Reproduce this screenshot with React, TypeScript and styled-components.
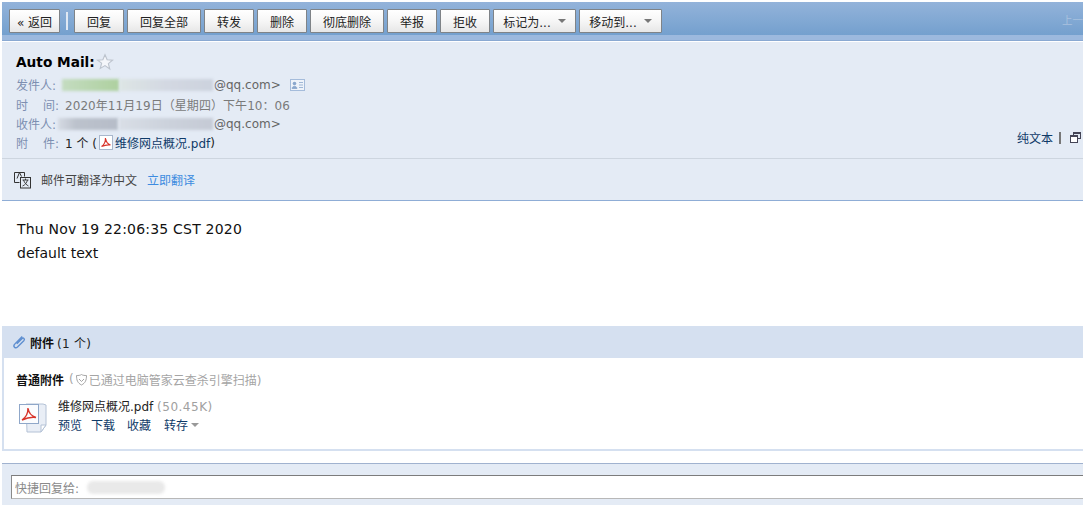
import React from "react";
import styled, { createGlobalStyle } from "styled-components";

const Global = createGlobalStyle`
  html, body { margin: 0; padding: 0; background: #fff; overflow: hidden; }
  body { font-family: "DejaVu Sans", "Noto Sans CJK SC", sans-serif; font-size: 12px; color: #000; }
  * { box-sizing: border-box; }
`;

const Page = styled.div`
  width: 1083px;
  height: 505px;
  padding: 2px 0 0 2px;
  overflow: hidden;
`;

const Toolbar = styled.div`
  height: 39px;
  display: flex;
  align-items: flex-start;
  padding: 7px 0 0 7px;
  background: linear-gradient(to bottom, #93b3da 0, #74a0ce 33px, #9cb9de 33px, #9cb9de 38px, #8aa9d2 38px, #8aa9d2 39px);
  justify-content: space-between;
  overflow: hidden;
`;

const ToolGroup = styled.div`
  display: flex;
  align-items: center;
  gap: 3px;
`;

const ToolButton = styled.div<{ $w: number }>`
  width: ${(p) => p.$w}px;
  height: 24px;
  display: flex;
  align-items: center;
  justify-content: center;
  gap: 7px;
  border: 1px solid #7f8387;
  border-radius: 1px;
  background: linear-gradient(to bottom, #ffffff 0, #f6f6f6 50%, #e7e7e7 100%);
  font-size: 12px;
  color: #222;
  white-space: nowrap;
`;

const ToolDivider = styled.span`
  width: 2px;
  height: 18px;
  margin: 0 3px 0 3px;
  background: #dfe8f3;
`;

const Caret = styled.i<{ $c?: string }>`
  display: inline-block;
  width: 0;
  height: 0;
  border-left: 4px solid transparent;
  border-right: 4px solid transparent;
  border-top: 4px solid ${(p) => p.$c || "#777"};
`;

const FadedNav = styled.span`
  font-size: 10.5px;
  color: #a9c1de;
  margin: 3px 0 0 0;
  white-space: nowrap;
`;

const Header = styled.div`
  margin-top: 1px;
  height: 117px;
  padding: 10px 0 0 14px;
  background: #e4ebf5;
  border-bottom: 1px solid #cdd5df;
  position: relative;
`;

const Subject = styled.div`
  display: flex;
  align-items: center;
  height: 20px;
  gap: 1px;
  font-size: 13.7px;
  font-weight: bold;
  margin-bottom: 3px;
`;

const MetaRow = styled.div<{ $h?: number }>`
  display: flex;
  align-items: center;
  height: ${(p) => p.$h || 19}px;
  color: #7a7a7a;
  font-size: 12px;
  white-space: nowrap;
`;

const MetaLabel = styled.span`
  width: 49px;
  color: #7d8fb1;
  display: flex;
  justify-content: space-between;
  padding-right: 6px;
`;

const Smudge = styled.span<{ $w: number; $bg: string; $ml?: number }>`
  display: inline-block;
  width: ${(p) => p.$w}px;
  height: 12px;
  margin-left: ${(p) => p.$ml || 0}px;
  margin-right: 1px;
  background: ${(p) => p.$bg};
  filter: blur(1.5px);
`;

const MetaIcon = styled.svg`
  margin-left: 9px;
`;

const Address = styled.span`
  color: #666;
`;

const SentAt = styled.span`
  letter-spacing: 0.06px;
`;

const Black = styled.span`
  color: #222;
`;

const SmallPdfIcon = styled.svg`
  margin: 0 2px 0 2px;
`;

const FileLink = styled.span`
  color: #0f3a68;
`;

const HeaderTools = styled.div`
  position: absolute;
  right: 2px;
  bottom: 12px;
  display: flex;
  align-items: center;
  color: #0f3a68;
  font-size: 12px;
  gap: 6px;
`;

const ToolSep = styled.span`
  width: 2px;
  height: 12px;
  background: #777;
  margin-right: 3px;
`;

const Translate = styled.div`
  height: 42px;
  padding-left: 12px;
  display: flex;
  align-items: center;
  background: #e4ebf5;
  border-bottom: 1px solid #8fadd6;
  font-size: 12px;
  color: #444;
`;

const TranslateText = styled.span`
  margin-left: 9px;
`;

const TranslateLink = styled.span`
  margin-left: 10px;
  color: #3d8be0;
`;

const Body = styled.div`
  height: 125px;
  padding: 16px 0 0 15px;
  font-size: 14px;
  line-height: 24px;
  color: #111;
`;

const DateLine = styled.div`
  letter-spacing: 0.2px;
`;

const Attach = styled.div`
  height: 125px;
  border-left: 2px solid #d5e0f0;
  border-bottom: 2px solid #d5e0f0;
`;

const AttachHead = styled.div`
  height: 32px;
  margin-left: -2px;
  padding-left: 10px;
  display: flex;
  align-items: center;
  gap: 4px;
  background: #d5e0f0;
  font-size: 12px;
  color: #222;
`;

const Count = styled.span`
  margin-left: 3px;
  letter-spacing: 0.3px;
`;

const Strong = styled.b`
  font-weight: bold;
  color: #111;
`;

const AttachKind = styled.div`
  padding: 12px 0 0 12px;
  display: flex;
  align-items: center;
  height: 30px;
  white-space: nowrap;
  font-size: 12px;
`;

const Scan = styled.span`
  display: flex;
  align-items: center;
  gap: 1px;
  margin-left: 5px;
  color: #a5a5a5;
`;

const FileRow = styled.div`
  display: flex;
  padding: 12px 0 0 14px;
  gap: 8px;
`;

const FileInfo = styled.div`
  display: flex;
  flex-direction: column;
  gap: 3px;
`;

const FileName = styled.div`
  font-size: 12px;
  color: #222;
  height: 14px;
  line-height: 14px;
`;

const FileSize = styled.span`
  color: #a0a0a0;
  letter-spacing: 0.5px;
`;

const FileActions = styled.div`
  display: flex;
  align-items: center;
  color: #0f3a68;
  height: 15px;
`;

const FileAction = styled.span<{ $gap?: number }>`
  display: flex;
  align-items: center;
  gap: 3px;
  margin-right: ${(p) => p.$gap || 0}px;
`;

const Reply = styled.div`
  margin-top: 12px;
  height: 42px;
  padding: 11px 0 0 9px;
  border-top: 1px solid #a0b2cf;
  background: #e4ebf5;
`;

const ReplyBox = styled.div`
  height: 24px;
  display: flex;
  align-items: center;
  padding-left: 3px;
  background: #fff;
  border: 1px solid #b8b8b8;
  border-top-color: #7c7c7c;
  border-left-color: #8a8a8a;
  border-right: 0;
  color: #8a8a8a;
  font-size: 12px;
`;

const ReplySmudge = styled.span`
  width: 78px;
  height: 13px;
  margin-left: 8px;
  background: #e9e9e9;
  border-radius: 6px;
  filter: blur(1.5px);
`;

const PdfSmall = () => (
  <SmallPdfIcon width="14" height="15" viewBox="0 0 14 15">
    <rect x=".5" y=".5" width="13" height="14" fill="#fff" stroke="#a9b7cc" />
    <path d="M2.500 11.500C5 10 6.500 7 6.500 3c.4 3.500 2 6 5 7-2.600-.4-5.500 0-9 1.500z" fill="none" stroke="#d8352c" strokeWidth="1.200" />
  </SmallPdfIcon>
);

const PdfLarge = () => (
  <svg width="32" height="34" viewBox="0 0 32 34">
    <path d="M6 4h17v0l3 1v20l-5 7H7z" transform="translate(2 0)" fill="#e9eef6" stroke="#b4c2d6" />
    <path d="M23 32l5-7h-5z" fill="#fff" stroke="#b4c2d6" />
    <rect x="1.500" y="4.500" width="19" height="19" fill="#fbfcfe" stroke="#8fa7c9" />
    <path d="M4 20c4-2.500 6-6.500 6-12 .6 4.500 3 8 8 9.500-4-.6-8.500 0-14 2.500z" fill="none" stroke="#d8352c" strokeWidth="1.400" />
  </svg>
);

const buttons: [string, number][] = [
  ["回复", 50], ["回复全部", 74], ["转发", 50], ["删除", 50], ["彻底删除", 74], ["举报", 50], ["拒收", 50],
];

export default function App() {
  return (
    <Page>
      <Global />
      <Toolbar>
        <ToolGroup>
          <ToolButton $w={51}>« 返回</ToolButton>
          <ToolDivider />
          {buttons.map(([t, w]) => (
            <ToolButton key={t} $w={w}>{t}</ToolButton>
          ))}
          <ToolButton $w={83}>标记为... <Caret /></ToolButton>
          <ToolButton $w={83}>移动到... <Caret /></ToolButton>
        </ToolGroup>
        <FadedNav>上一</FadedNav>
      </Toolbar>
      <Header>
        <Subject>
          Auto Mail:
          <svg width="18" height="18" viewBox="0 0 16 16">
            <path d="M8 1.500l1.900 4.500 4.800.4-3.700 3.100 1.200 4.700L8 11.200l-4.200 2.500L5 9 1.300 6.400l4.800-.4z" fill="#f4f6fa" stroke="#bcc3cd" />
          </svg>
        </Subject>
        <MetaRow>
          <MetaLabel>发件人:</MetaLabel>
          <Smudge $ml={-3} $w={57} $bg="linear-gradient(90deg,#c4dcc0,#aed09f)" />
          <Smudge $w={93} $bg="linear-gradient(90deg,#dde5e4,#d3d8e2,#ccd2dd)" />
          <Address>@qq.com&gt;</Address>
          <MetaIcon width="15" height="12" viewBox="0 0 15 12">
            <rect x=".5" y=".5" width="14" height="11" fill="#eef3fa" stroke="#a5bcdb" />
            <circle cx="4.500" cy="4.500" r="1.800" fill="#8aa7cd" />
            <path d="M2 9.500c.5-3 4.500-3 5 0zM9 3.500h4M9 6h4M9 8.500h4" fill="#8aa7cd" stroke="#8aa7cd" strokeWidth=".8" />
          </MetaIcon>
        </MetaRow>
        <MetaRow $h={20}>
          <MetaLabel><span>时</span><span>间:</span></MetaLabel>
          <SentAt>2020年11月19日（星期四）下午10：06</SentAt>
        </MetaRow>
        <MetaRow>
          <MetaLabel>收件人:</MetaLabel>
          <Smudge $ml={-7} $w={60} $bg="linear-gradient(90deg,#d5dae3,#bcc2cc 30%,#b6bcc8)" />
          <Smudge $w={94} $bg="linear-gradient(90deg,#d9dee6,#ccd2dc,#c5cad5)" />
          <Address>@qq.com&gt;</Address>
        </MetaRow>
        <MetaRow>
          <MetaLabel><span>附</span><span>件:</span></MetaLabel>
          <Black>1 个 (</Black>
          <PdfSmall />
          <FileLink>维修网点概况.pdf</FileLink>
          <Black>)</Black>
        </MetaRow>
        <HeaderTools>
          纯文本
          <ToolSep />
          <svg width="11" height="11" viewBox="0 0 11 11">
            <rect x="3.500" y=".5" width="7" height="6" fill="#dfe6f0" stroke="#445" />
            <path d="M3.500 1.500h7" stroke="#445" />
            <rect x=".5" y="3.500" width="7" height="7" fill="#fff" stroke="#445" />
            <path d="M.5 4.500h7" stroke="#445" />
          </svg>
        </HeaderTools>
      </Header>
      <Translate>
        <svg width="18" height="18" viewBox="0 0 18 18" fill="none" stroke="#333">
          <path d="M.5 1.500h10v4M.5 1.500v10h5" />
          <path d="M5.500 1.500L3 7.500M5.500 1.500l2 4" />
          <rect x="6.500" y="6.500" width="10" height="10.500" fill="#e4ebf5" />
          <path d="M8.500 9h6M11.500 7.500V9M9.500 9c1 3 3 5 5 6M13.500 9c-.8 3-2.500 5-5 6" strokeWidth=".9" />
        </svg>
        <TranslateText>邮件可翻译为中文</TranslateText>
        <TranslateLink>立即翻译</TranslateLink>
      </Translate>
      <Body>
        <DateLine>Thu Nov 19 22:06:35 CST 2020</DateLine>
        <div>default text</div>
      </Body>
      <Attach>
        <AttachHead>
          <svg width="14" height="15" viewBox="0 0 13 14" fill="none" stroke="#5f8fd0" strokeWidth="1.300">
            <path d="M9.500 1.500L2.500 8.500c-2 2.200.6 4.600 2.600 2.700L11 5.300c1.400-1.500-.4-3.200-1.800-1.900L4.500 8.200" />
          </svg>
          <span><Strong>附件</Strong><Count>(1 个)</Count></span>
        </AttachHead>
        <AttachKind>
          <Strong>普通附件</Strong>
          <Scan>
            (
            <svg width="13" height="13" viewBox="0 0 13 13" fill="none" stroke="#a5a5a5">
              <path d="M6.500 1.500c1.500 1 3 1 5 1 0 4.500-1 7.500-5 9.500-4-2-5-5-5-9.500 2 0 3.500 0 5-1z" />
              <path d="M4 6l2.500 2.500L9 6" />
            </svg>
            已通过电脑管家云查杀引擎扫描)
          </Scan>
        </AttachKind>
        <FileRow>
          <PdfLarge />
          <FileInfo>
            <FileName>维修网点概况.pdf <FileSize>(50.45K)</FileSize></FileName>
            <FileActions>
              <FileAction $gap={9}>预览</FileAction>
              <FileAction $gap={12}>下载</FileAction>
              <FileAction $gap={13}>收藏</FileAction>
              <FileAction>转存 <Caret $c="#999" /></FileAction>
            </FileActions>
          </FileInfo>
        </FileRow>
      </Attach>
      <Reply>
        <ReplyBox>
          快捷回复给:
          <ReplySmudge />
        </ReplyBox>
      </Reply>
    </Page>
  );
}
